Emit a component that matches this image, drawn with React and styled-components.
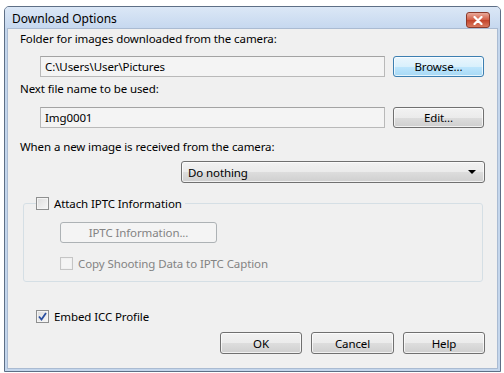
import React from "react";
import styled, { createGlobalStyle, css } from "styled-components";

const Global = createGlobalStyle`
    html, body {
        margin: 0;
        padding: 0;
        background: #ffffff;
    }
    body {
        font-family: "Noto Sans", "Open Sans", sans-serif;
        font-size: 11.5px;
        letter-spacing: -0.1px;
        color: #000;
    }
`;

const Window = styled.div`
    margin: 6px 0 0 4px;
    width: 497px;
    height: 366px;
    box-sizing: border-box;
    border: 1px solid #5e6f86;
    border-radius: 5px 5px 0 0;
    background: #c4d6ec;
    display: flex;
    flex-direction: column;
    overflow: hidden;
`;

const TitleBar = styled.div`
    height: 21px;
    flex: none;
    display: flex;
    align-items: center;
    justify-content: space-between;
    padding: 1px 10px 0 7px;
    box-sizing: border-box;
    background: linear-gradient(#dbe7f6, #c6d8ef);
`;

const Title = styled.span`
    font-size: 12px;
    letter-spacing: 0;
    color: #000;
`;

const CloseButton = styled.div`
    width: 22px;
    height: 14px;
    margin-top: 4px;
    border: 1px solid #8a3a2c;
    border-radius: 3px;
    background: linear-gradient(#e9a99a, #d25c44 50%, #c3432a 51%, #d9795e);
    display: flex;
    align-items: center;
    justify-content: center;
`;

const Body = styled.div`
    flex: 1;
    margin: 0 2px 2px 2px;
    background: #f0f0f0;
    border: 1px solid #aabbd2;
    padding: 0 12px;
    display: flex;
    flex-direction: column;
`;

const Label = styled.div`
    height: 16px;
    line-height: 16px;
    margin-top: ${(p) => p.$top || 0}px;
    white-space: nowrap;
`;

const FieldRow = styled.div`
    display: flex;
    align-items: center;
    gap: 8px;
    margin: ${(p) => p.$top || 0}px 0 0 20px;
`;

const Field = styled.div`
    width: 345px;
    height: 21px;
    box-sizing: border-box;
    border: 1px solid #b9b9b9;
    border-top-color: #a3a3a3;
    background: #f4f4f4;
    padding: 0 4px;
    line-height: 19px;
    white-space: nowrap;
`;

const buttonBase = css`
    box-sizing: border-box;
    height: ${(p) => p.$h || 22}px;
    border: 1px solid #707070;
    border-radius: 3px;
    background: linear-gradient(#f2f2f2, #ebebeb 50%, #dddddd 51%, #cfcfcf);
    box-shadow: inset 0 0 0 1px rgba(255, 255, 255, 0.7);
    display: flex;
    align-items: center;
    justify-content: center;
    white-space: nowrap;
`;

const Button = styled.div`
    ${buttonBase};
    width: ${(p) => p.$w || 91}px;
    ${(p) =>
        p.$default &&
        css`
            border-color: #3c7fb1;
            background: linear-gradient(#eaf6fd, #d9f0fc 50%, #bee6fd 51%, #a7d9f5);
        `}
    ${(p) =>
        p.$disabled &&
        css`
            border-color: #adb2b5;
            background: #f4f4f4;
            box-shadow: none;
            color: #838383;
        `}
`;

const ComboRow = styled.div`
    display: flex;
    justify-content: flex-end;
    margin-top: 6px;
`;

const Combo = styled.div`
    ${buttonBase};
    width: 304px;
    justify-content: space-between;
    padding: 0 8px 0 6px;
`;

const Arrow = styled.span`
    width: 0;
    height: 0;
    border-left: 4px solid transparent;
    border-right: 4px solid transparent;
    border-top: 4px solid #000;
`;

const Group = styled.fieldset`
    margin: 12px 2px 0 3px;
    padding: 0 0 0 12px;
    height: 87px;
    box-sizing: border-box;
    border: 1px solid #d5dfe5;
    border-radius: 3px;
    min-width: 0;
`;

const Legend = styled.legend`
    padding: 0 3px 0 0;
    margin: 0;
`;

const GroupBody = styled.div`
    display: flex;
    flex-direction: column;
    align-items: flex-start;
    padding: 11px 0 0 24px;
`;

const CheckRow = styled.label`
    display: flex;
    align-items: center;
    gap: 5px;
    height: 16px;
    color: ${(p) => (p.$disabled ? "#838383" : "#000")};
    margin: ${(p) => p.$margin || "0"};
    white-space: nowrap;
`;

const Box = styled.span`
    width: 13px;
    height: 13px;
    box-sizing: border-box;
    border: 1px solid ${(p) => (p.$disabled ? "#c5c5c5" : "#8e8f8f")};
    background: ${(p) =>
        p.$disabled
            ? "#f4f4f4"
            : "linear-gradient(135deg, #dcdcdc, #f7f7f7)"};
    box-shadow: inset 0 0 0 1px ${(p) => (p.$disabled ? "#f0f0f0" : "#f4f4f4")};
    display: flex;
    align-items: center;
    justify-content: center;
`;

const Footer = styled.div`
    display: flex;
    justify-content: flex-end;
    gap: 9px;
    margin-top: 8px;
`;

const CheckBox = ({ checked, disabled, children, margin }) => (
    <CheckRow $disabled={disabled} $margin={margin}>
        <Box $disabled={disabled}>
            {checked && (
                <svg width="9" height="9" viewBox="0 0 9 9">
                    <path
                        d="M1 4.5 L3.5 7.5 L8 1"
                        fill="none"
                        stroke="#2a4fa0"
                        strokeWidth="1.8"
                    />
                </svg>
            )}
        </Box>
        {children}
    </CheckRow>
);

const App = () => {
    return (
        <>
            <Global />
            <Window>
                <TitleBar>
                    <Title>Download Options</Title>
                    <CloseButton>
                        <svg width="10" height="9" viewBox="0 0 10 9">
                            <path
                                d="M1.5 1 L8.5 8 M8.5 1 L1.5 8"
                                stroke="#ffffff"
                                strokeWidth="2.2"
                                strokeLinecap="round"
                            />
                        </svg>
                    </CloseButton>
                </TitleBar>
                <Body>
                    <Label $top={2}>
                        Folder for images downloaded from the camera:
                    </Label>
                    <FieldRow $top={9}>
                        <Field>C:\Users\User\Pictures</Field>
                        <Button $default $h={21}>
                            Browse...
                        </Button>
                    </FieldRow>
                    <Label $top={4}>Next file name to be used:</Label>
                    <FieldRow $top={10}>
                        <Field>Img0001</Field>
                        <Button $h={21}>Edit...</Button>
                    </FieldRow>
                    <Label $top={11}>
                        When a new image is received from the camera:
                    </Label>
                    <ComboRow>
                        <Combo>
                            <span>Do nothing</span>
                            <Arrow />
                        </Combo>
                    </ComboRow>
                    <Group>
                        <Legend>
                            <CheckBox>Attach IPTC Information</CheckBox>
                        </Legend>
                        <GroupBody>
                            <Button $disabled $w={157} $h={21}>
                                IPTC Information...
                            </Button>
                            <CheckBox disabled margin="12px 0 0 0">
                                Copy Shooting Data to IPTC Caption
                            </CheckBox>
                        </GroupBody>
                    </Group>
                    <CheckBox checked margin="26px 0 0 16px">
                        Embed ICC Profile
                    </CheckBox>
                    <Footer>
                        <Button $w={82}>OK</Button>
                        <Button $w={83}>Cancel</Button>
                        <Button $w={82}>Help</Button>
                    </Footer>
                </Body>
            </Window>
        </>
    );
};

export default App;
